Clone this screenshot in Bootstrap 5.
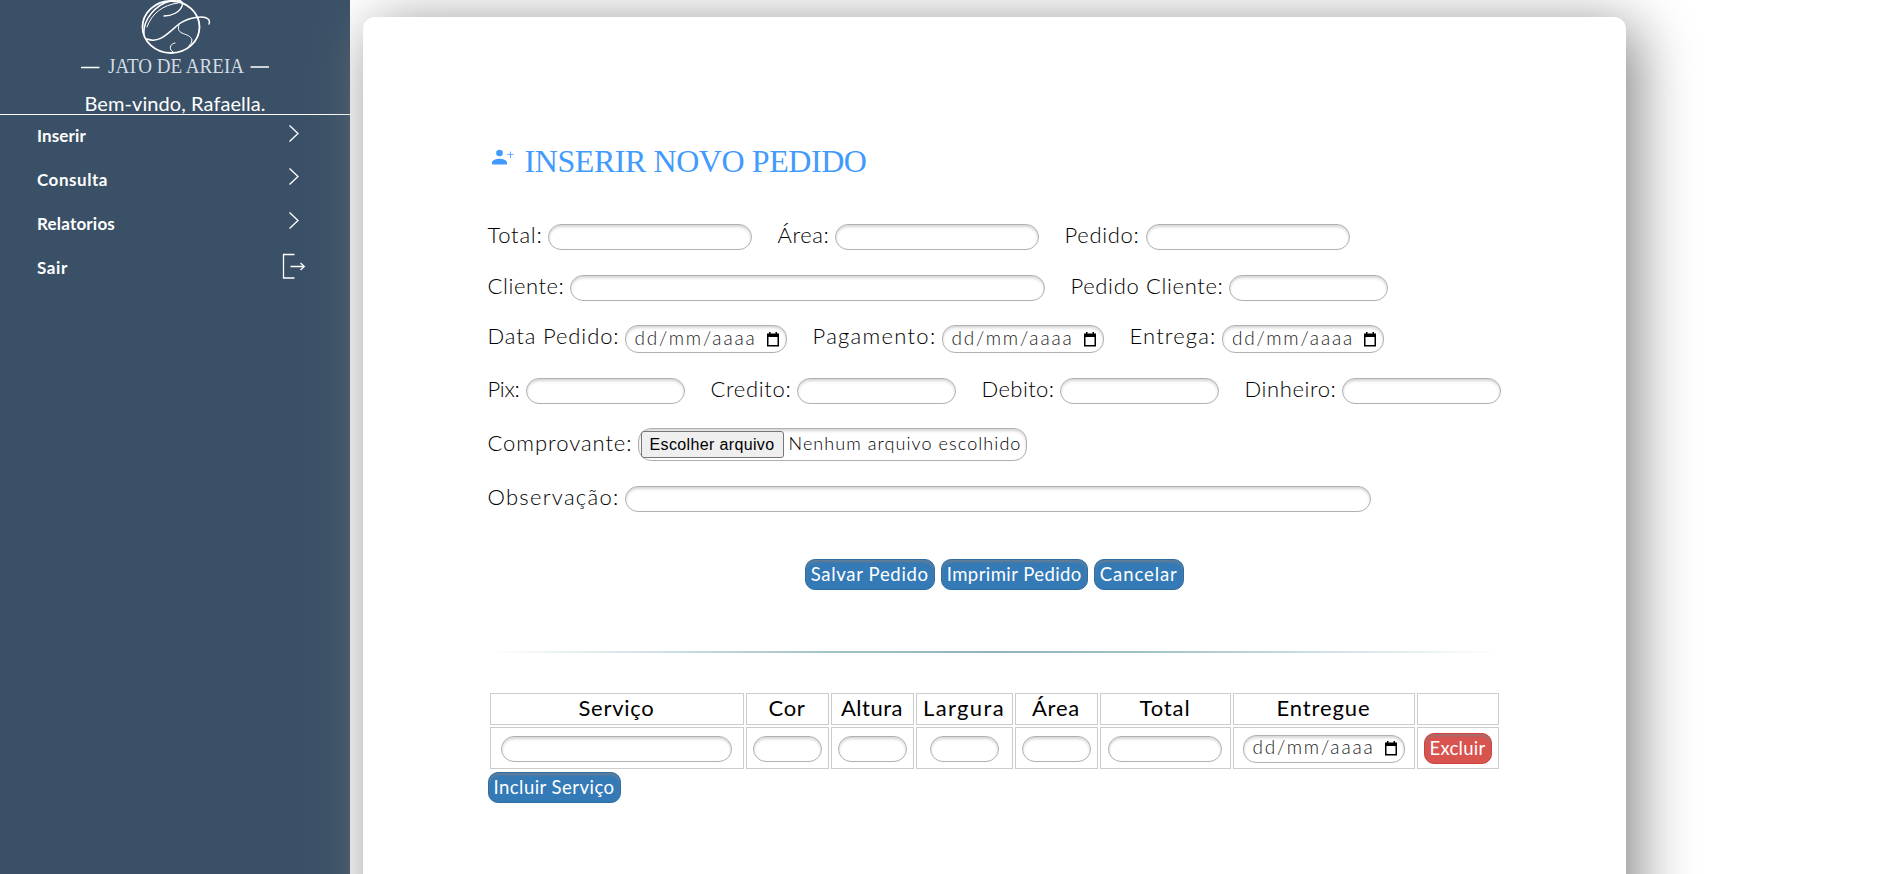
<!DOCTYPE html>
<html lang="pt-br">
<head>
<meta charset="utf-8">
<title>Jato de Areia</title>
<link href="https://cdn.jsdelivr.net/npm/bootstrap@5.3.0/dist/css/bootstrap.min.css" rel="stylesheet">
<style>
body{height:874px;overflow:hidden;background:#fff;color:#000;font-family:Lato,"Open Sans",sans-serif}
.side{width:350px;background:#3a5066;color:#fff}
.brand{height:115px;border-bottom:1px solid #fff}
.brand svg{height:82px;width:350px}
.hello{font-size:20px;line-height:24px;margin-top:9px}
.menu-item{height:44px;padding:1px 44px 0 37px;font-weight:700;font-size:17px;color:#fff;text-decoration:none}
.menu-item:first-child{height:42px;padding-top:0}
.menu-item svg{width:24px;height:26px;margin-top:-7px}
.menu-item:last-child svg{margin-top:-3px}
.sheet{width:1263px;height:1000px;margin:17px 0 0 13px;border-radius:12px;background:#fff;box-shadow:10px 10px 60px #808080;padding:120px 125px 0 124.5px}
.title{font-family:"Liberation Serif",serif;font-size:32px;line-height:40px;color:#419afd;height:40px;margin:4px 0 43px}
.title svg{width:24px;height:18px;margin:-7px 11px 0 2px}
.line{height:26px;gap:26px;margin-bottom:25px}
.lbl{font-weight:300;font-size:22px;line-height:22px;padding-bottom:4px}
.box{height:26px;border:1px solid #b0b0b0;border-radius:13px;box-shadow:inset 0 2px 3px rgba(0,0,0,.17);background:#fff}
.date-box{height:28px;width:162px;padding:0 6px 0 9px;font-weight:300;font-size:19px;color:#222}
.date-box span{margin-top:-2px}
.date-box svg{width:14px;height:15px}
.file-box{height:33px;width:389px;padding:0 4px 0 2px;font-weight:300;font-size:18px}
.file-box>span:last-child{margin-top:-3px}
.pick{width:143px;height:27px;border:1px solid #767676;border-radius:3px;background:#efefef;font:16px "Liberation Sans",sans-serif;line-height:26px}
.act{height:31px;border-radius:10px;background:#337ab7;border:1px solid #2e6da4;color:#fff;font-size:18.500px;line-height:28px;padding:0 5px;box-shadow:inset 0 2px 3px rgba(128,128,128,.7)}
.act-del{background:#d9534f;border-color:#d43f3a}
.rule{height:2px;margin-top:61px;background:linear-gradient(90deg,transparent 0,#a4c3c8 33%,#8fb3b9 50%,#a4c3c8 66%,transparent 100%)}
.grid{display:grid;grid-template-columns:254px 83px 83px 97px 83px 131px 182px 82px;grid-template-rows:32px 42px;gap:2px;margin:40px 0 3px 2px;width:1009px}
.cell{border:1px solid #ccc;display:flex;align-items:center;justify-content:center}
.cell .box{margin:2px 0 0 0}
.cell .date-box{margin-top:1px}
.head-cell{font-size:22px;padding:0 0 3px 0}
</style>
</head>
<body class="d-flex">
<aside class="side flex-shrink-0">
  <div class="brand text-center">
    <svg class="d-block" viewBox="0 0 350 82" fill="none" stroke="#fff" stroke-linecap="round">
      <ellipse cx="171" cy="27" rx="28.5" ry="26" stroke-width="1.8"/>
      <path d="M144 34C143 20 155 5 170 1C178-1 184 0 182 6C180 12 172 16 164 16" stroke-width="1.4"/>
      <path d="M147 27C152 13 163 5 178 3" stroke-width="1"/>
      <path d="M147 39C160 44 169 32 179 24C187 18 205 14 209 20Q210 22 209 24" stroke-width="1.5"/>
      <path d="M179 25C175 36 190 32 192 40Q192 43 189 46M175 43C169 44 169 50 173 52" stroke-width="1"/>
      <path d="M81 67.500H99.500M250.500 67H269" stroke-width="1.300" stroke-linecap="butt"/>
      <text x="108" y="73" textLength="136" lengthAdjust="spacingAndGlyphs" font-family="Liberation Serif, serif" font-size="22" fill="#d3dbe3" stroke="none">JATO DE AREIA</text>
    </svg>
    <div class="hello"><span data-w="181">Bem-vindo, Rafaella.</span></div>
  </div>
  <nav class="d-flex flex-column">
    <a class="menu-item d-flex align-items-center justify-content-between"><span data-w="49">Inserir</span><svg viewBox="0 0 24 26" fill="none" stroke="#fff" stroke-width="1.3"><path d="M7.500 5.500L16 13.500L7.500 21.500"/></svg></a>
    <a class="menu-item d-flex align-items-center justify-content-between"><span data-w="71">Consulta</span><svg viewBox="0 0 24 26" fill="none" stroke="#fff" stroke-width="1.3"><path d="M7.500 5.500L16 13.500L7.500 21.500"/></svg></a>
    <a class="menu-item d-flex align-items-center justify-content-between"><span data-w="78">Relatorios</span><svg viewBox="0 0 24 26" fill="none" stroke="#fff" stroke-width="1.3"><path d="M7.500 5.500L16 13.500L7.500 21.500"/></svg></a>
    <a class="menu-item d-flex align-items-center justify-content-between"><span data-w="31">Sair</span><svg viewBox="0 0 24 26" fill="none" stroke="#fff" stroke-width="1.3"><path d="M12.500 1.500H1.500V25H12.500M8.500 13.500H22M18.500 10L22.300 13.500L18.500 17"/></svg></a>
  </nav>
</aside>
<main class="sheet flex-shrink-0">
  <h1 class="title d-flex align-items-center fw-normal"><svg viewBox="0 0 24 18" fill="#419afd"><circle cx="9.500" cy="4" r="3.300"/><path d="M2 15.500V13.500C3 8.500 16 8.500 17 13.500V15.500ZM20 2.500H20.800V5.300H23.500V6.100H20.800V9H20V6.100H17.300V5.300H20Z"/></svg><span data-w="342">INSERIR NOVO PEDIDO</span></h1>
  <div class="line d-flex">
    <div class="d-flex"><div style="width:60px"><span class="lbl" data-w="55">Total:</span></div><div class="box" style="width:204px"></div></div>
    <div class="d-flex"><div style="width:57px"><span class="lbl" data-w="52">Área:</span></div><div class="box" style="width:204px"></div></div>
    <div class="d-flex"><div style="width:81px"><span class="lbl" data-w="75">Pedido:</span></div><div class="box" style="width:204px"></div></div>
  </div>
  <div class="line d-flex" style="margin-bottom:24px">
    <div class="d-flex"><div style="width:82px"><span class="lbl" data-w="77">Cliente:</span></div><div class="box" style="width:475px"></div></div>
    <div class="d-flex"><div style="width:158px"><span class="lbl" data-w="153">Pedido Cliente:</span></div><div class="box" style="width:159px"></div></div>
  </div>
  <div class="line d-flex align-items-center" style="height:28px">
    <div class="d-flex"><div style="width:137px"><span class="lbl" data-w="132">Data Pedido:</span></div><div class="box date-box d-flex align-items-center justify-content-between"><span data-w="122">dd/mm/aaaa</span><svg viewBox="0 0 14 15"><path d="M1 1.500H3V0H4.500V1.500H9.500V0H11V1.500H13V14.500H1ZM2.500 5V13H11.500V5Z" fill-rule="evenodd"/></svg></div></div>
    <div class="d-flex"><div style="width:129px"><span class="lbl" data-w="124">Pagamento:</span></div><div class="box date-box d-flex align-items-center justify-content-between"><span data-w="122">dd/mm/aaaa</span><svg viewBox="0 0 14 15"><path d="M1 1.500H3V0H4.500V1.500H9.500V0H11V1.500H13V14.500H1ZM2.500 5V13H11.500V5Z" fill-rule="evenodd"/></svg></div></div>
    <div class="d-flex"><div style="width:92.500px"><span class="lbl" data-w="87">Entrega:</span></div><div class="box date-box d-flex align-items-center justify-content-between"><span data-w="122">dd/mm/aaaa</span><svg viewBox="0 0 14 15"><path d="M1 1.500H3V0H4.500V1.500H9.500V0H11V1.500H13V14.500H1ZM2.500 5V13H11.500V5Z" fill-rule="evenodd"/></svg></div></div>
  </div>
  <div class="line d-flex" style="margin-bottom:24px">
    <div class="d-flex"><div style="width:38px"><span class="lbl" data-w="32">Pix:</span></div><div class="box" style="width:159px"></div></div>
    <div class="d-flex"><div style="width:86px"><span class="lbl" data-w="81">Credito:</span></div><div class="box" style="width:159px"></div></div>
    <div class="d-flex"><div style="width:78px"><span class="lbl" data-w="73">Debito:</span></div><div class="box" style="width:159px"></div></div>
    <div class="d-flex"><div style="width:97px"><span class="lbl" data-w="92">Dinheiro:</span></div><div class="box" style="width:159px"></div></div>
  </div>
  <div class="line d-flex" style="height:33px">
    <div class="d-flex align-items-center"><div style="width:150px"><span class="lbl" data-w="145">Comprovante:</span></div><div class="box file-box d-flex align-items-center justify-content-between"><span class="pick text-center"><span data-w="125">Escolher arquivo</span></span><span data-w="233">Nenhum arquivo escolhido</span></div></div>
  </div>
  <div class="line d-flex">
    <div class="d-flex"><div style="width:137px"><span class="lbl" data-w="132">Observação:</span></div><div class="box" style="width:746px"></div></div>
  </div>
  <div class="d-flex justify-content-center" style="gap:6px;margin-top:47px">
    <div class="act"><span data-w="118">Salvar Pedido</span></div>
    <div class="act"><span data-w="135">Imprimir Pedido</span></div>
    <div class="act"><span data-w="78">Cancelar</span></div>
  </div>
  <div class="rule"></div>
  <div class="grid">
    <div class="cell head-cell"><span data-w="76">Serviço</span></div>
    <div class="cell head-cell"><span data-w="37">Cor</span></div>
    <div class="cell head-cell"><span data-w="62">Altura</span></div>
    <div class="cell head-cell"><span data-w="82">Largura</span></div>
    <div class="cell head-cell"><span data-w="48">Área</span></div>
    <div class="cell head-cell"><span data-w="51">Total</span></div>
    <div class="cell head-cell"><span data-w="94">Entregue</span></div>
    <div class="cell head-cell"></div>
    <div class="cell"><div class="box" style="width:231px"></div></div>
    <div class="cell"><div class="box" style="width:69px"></div></div>
    <div class="cell"><div class="box" style="width:69px"></div></div>
    <div class="cell"><div class="box" style="width:69px"></div></div>
    <div class="cell"><div class="box" style="width:69px"></div></div>
    <div class="cell"><div class="box" style="width:114px"></div></div>
    <div class="cell"><div class="box date-box d-flex align-items-center justify-content-between"><span data-w="122">dd/mm/aaaa</span><svg viewBox="0 0 14 15"><path d="M1 1.500H3V0H4.500V1.500H9.500V0H11V1.500H13V14.500H1ZM2.500 5V13H11.500V5Z" fill-rule="evenodd"/></svg></div></div>
    <div class="cell"><div class="act act-del"><span data-w="56">Excluir</span></div></div>
  </div>
  <div class="d-flex"><div class="act"><span data-w="121">Incluir Serviço</span></div></div>
</main>
<script src="https://cdn.jsdelivr.net/npm/bootstrap@5.3.0/dist/js/bootstrap.bundle.min.js"></script>
<script>
document.querySelectorAll('[data-w]').forEach(function (el) {
  el.style.whiteSpace = 'nowrap';
  el.style.display = 'inline-block';
  var w = +el.dataset.w, n = el.textContent.length;
  el.style.letterSpacing = ((w - el.getBoundingClientRect().width) / n) + 'px';
});
</script>
</body>
</html>
